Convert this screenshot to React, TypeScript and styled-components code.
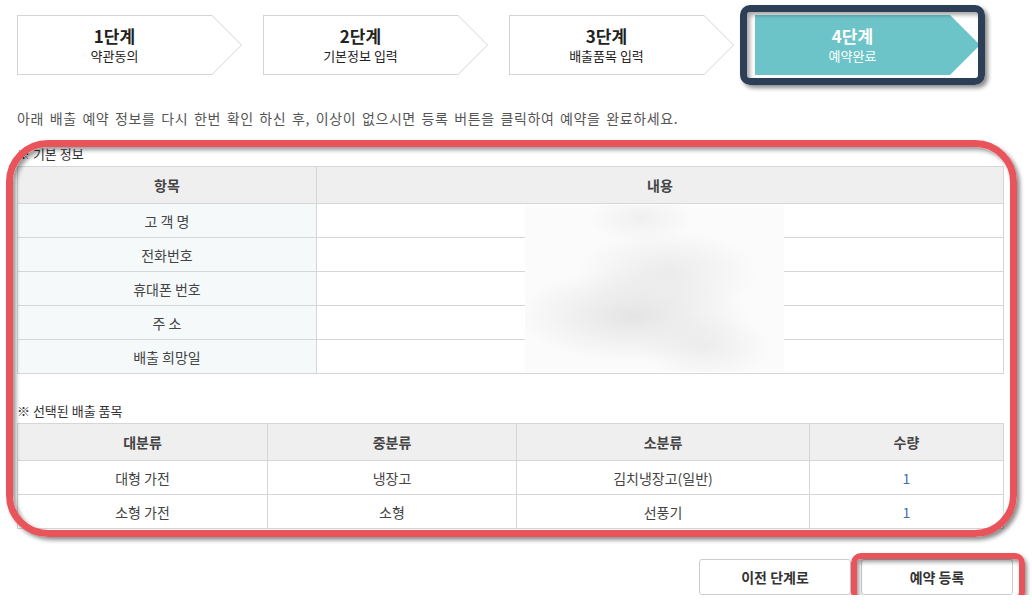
import React from 'react';
import styled, { createGlobalStyle } from 'styled-components';

const GlobalStyle = createGlobalStyle`
  body {
    margin: 0;
    background: #fff;
    font-family: "Noto Sans CJK KR", "Noto Sans", sans-serif;
    color: #444;
  }
`;

const chevron = (arrow: number) =>
  `polygon(0 0, calc(100% - ${arrow}px) 0, 100% 50%, calc(100% - ${arrow}px) 100%, 0 100%)`;

const Page = styled.div`
  width: 996px;
  padding: 15px 0 0 17px;
`;

const Steps = styled.ol`
  display: flex;
  gap: 21px;
  margin: 0;
  padding: 0;
  list-style: none;
`;

const StepItem = styled.li`
  position: relative;
  width: 225px;
  height: 60px;
`;

const StepShape = styled.div<{ $active?: boolean }>`
  height: 100%;
  padding: 1px;
  box-sizing: border-box;
  clip-path: ${chevron(30)};
  background: ${(p) => (p.$active ? '#6cc4c9' : '#d4d4d4')};
`;

const StepFace = styled.div<{ $active?: boolean }>`
  height: 100%;
  display: flex;
  flex-direction: column;
  align-items: center;
  justify-content: center;
  padding-right: 30px;
  box-sizing: border-box;
  clip-path: ${chevron(29)};
  background: ${(p) => (p.$active ? '#6cc4c9' : '#fff')};
  color: ${(p) => (p.$active ? '#fff' : '#222')};
`;

const StepNo = styled.span`
  font-size: 17px;
  font-weight: 700;
  line-height: 22px;
`;

const StepName = styled.span`
  font-size: 13px;
  line-height: 18px;
`;

const StepHighlight = styled.div`
  position: absolute;
  left: -15px;
  top: -10px;
  right: -5px;
  bottom: -10px;
  border: 7px solid #2d3f56;
  border-radius: 10px;
  box-shadow: 3px 3px 4px rgba(0, 0, 0, 0.45), inset 3px 3px 4px rgba(0, 0, 0, 0.35);
  pointer-events: none;
`;

const Intro = styled.p`
  margin: 33px 0 0;
  font-size: 14px;
  line-height: 20px;
  letter-spacing: 0.6px;
  word-spacing: 2px;
  color: #555;
`;

const Section = styled.div`
  position: relative;
  width: 987px;
  margin-top: 17px;
`;

const Label = styled.div<{ $gap?: number }>`
  margin-top: ${(p) => p.$gap ?? 0}px;
  margin-bottom: 3px;
  font-size: 13px;
  line-height: 18px;
  color: #333;
`;

const TableWrap = styled.div`
  position: relative;
`;

const Table = styled.table`
  width: 100%;
  border-collapse: collapse;
  table-layout: fixed;
  font-size: 14px;
  color: #444;
`;

const Th = styled.th`
  height: 36px;
  padding: 0;
  border: 1px solid #d6d6d6;
  background: #efefef;
  font-weight: 700;
  color: #444;
`;

const Td = styled.td<{ $head?: boolean; $num?: boolean }>`
  height: 33px;
  padding: 0;
  border: 1px solid #d6d6d6;
  text-align: center;
  background: ${(p) => (p.$head ? '#f5f9fa' : '#fff')};
  color: ${(p) => (p.$num ? '#3f6fa8' : '#444')};
`;

const Redaction = styled.div`
  position: absolute;
  left: 508px;
  top: 39px;
  width: 259px;
  height: 167px;
  background:
    radial-gradient(ellipse 45% 28% at 42% 66%, #e4e4e4, rgba(250, 250, 250, 0) 100%),
    radial-gradient(ellipse 35% 25% at 55% 40%, #ebebeb, rgba(250, 250, 250, 0) 100%),
    radial-gradient(ellipse 25% 20% at 70% 85%, #ededed, rgba(250, 250, 250, 0) 100%),
    radial-gradient(ellipse 20% 15% at 45% 8%, #f0f0f0, rgba(250, 250, 250, 0) 100%),
    #fbfbfb;
`;

const Frame = styled.div`
  position: absolute;
  left: -11px;
  top: -5px;
  right: -13px;
  bottom: -8px;
  border: 7px solid #e9545a;
  border-radius: 42px;
  box-shadow: 3px 3px 4px rgba(0, 0, 0, 0.45), inset 3px 3px 4px rgba(0, 0, 0, 0.4);
  pointer-events: none;
`;

const Actions = styled.div`
  display: flex;
  justify-content: flex-end;
  gap: 10px;
  margin-top: 30px;
`;

const ButtonSlot = styled.div`
  position: relative;
`;

const Button = styled.button`
  width: 152px;
  height: 36px;
  border: 1px solid #ccc;
  border-radius: 3px;
  background: #fff;
  font-family: inherit;
  font-size: 14px;
  font-weight: 700;
  color: #333;
  cursor: pointer;
`;

const ButtonFrame = styled.div`
  position: absolute;
  left: -10px;
  top: -6px;
  right: -12px;
  bottom: -7px;
  border: 6px solid #e9545a;
  border-radius: 10px;
  box-shadow: 2px 3px 4px rgba(0, 0, 0, 0.45), inset 2px 3px 4px rgba(0, 0, 0, 0.4);
  pointer-events: none;
`;

const steps = [
  { no: '1단계', name: '약관동의' },
  { no: '2단계', name: '기본정보 입력' },
  { no: '3단계', name: '배출품목 입력' },
  { no: '4단계', name: '예약완료' },
];

const infoRows = ['고 객 명', '전화번호', '휴대폰 번호', '주 소', '배출 희망일'];

const items = [
  { big: '대형 가전', mid: '냉장고', small: '김치냉장고(일반)', qty: 1 },
  { big: '소형 가전', mid: '소형', small: '선풍기', qty: 1 },
];

export default function App() {
  return (
    <Page>
      <GlobalStyle />
      <Steps>
        {steps.map((s, i) => {
          const active = i === steps.length - 1;
          return (
            <StepItem key={s.no}>
              <StepShape $active={active}>
                <StepFace $active={active}>
                  <StepNo>{s.no}</StepNo>
                  <StepName>{s.name}</StepName>
                </StepFace>
              </StepShape>
              {active && <StepHighlight />}
            </StepItem>
          );
        })}
      </Steps>

      <Intro>
        아래 배출 예약 정보를 다시 한번 확인 하신 후, 이상이 없으시면 등록 버튼을 클릭하여 예약을 완료하세요.
      </Intro>

      <Section>
        <Label>※ 기본 정보</Label>
        <TableWrap>
          <Table>
            <colgroup>
              <col style={{ width: 299 }} />
              <col />
            </colgroup>
            <thead>
              <tr>
                <Th>항목</Th>
                <Th>내용</Th>
              </tr>
            </thead>
            <tbody>
              {infoRows.map((r) => (
                <tr key={r}>
                  <Td $head>{r}</Td>
                  <Td />
                </tr>
              ))}
            </tbody>
          </Table>
          <Redaction />
        </TableWrap>

        <Label $gap={28}>※ 선택된 배출 품목</Label>
        <Table>
          <colgroup>
            <col style={{ width: 250 }} />
            <col style={{ width: 249 }} />
            <col style={{ width: 293 }} />
            <col />
          </colgroup>
          <thead>
            <tr>
              <Th>대분류</Th>
              <Th>중분류</Th>
              <Th>소분류</Th>
              <Th>수량</Th>
            </tr>
          </thead>
          <tbody>
            {items.map((it) => (
              <tr key={it.small}>
                <Td>{it.big}</Td>
                <Td>{it.mid}</Td>
                <Td>{it.small}</Td>
                <Td $num>{it.qty}</Td>
              </tr>
            ))}
          </tbody>
        </Table>
        <Frame />
      </Section>

      <Actions>
        <ButtonSlot>
          <Button>이전 단계로</Button>
        </ButtonSlot>
        <ButtonSlot>
          <Button>예약 등록</Button>
          <ButtonFrame />
        </ButtonSlot>
      </Actions>
    </Page>
  );
}
